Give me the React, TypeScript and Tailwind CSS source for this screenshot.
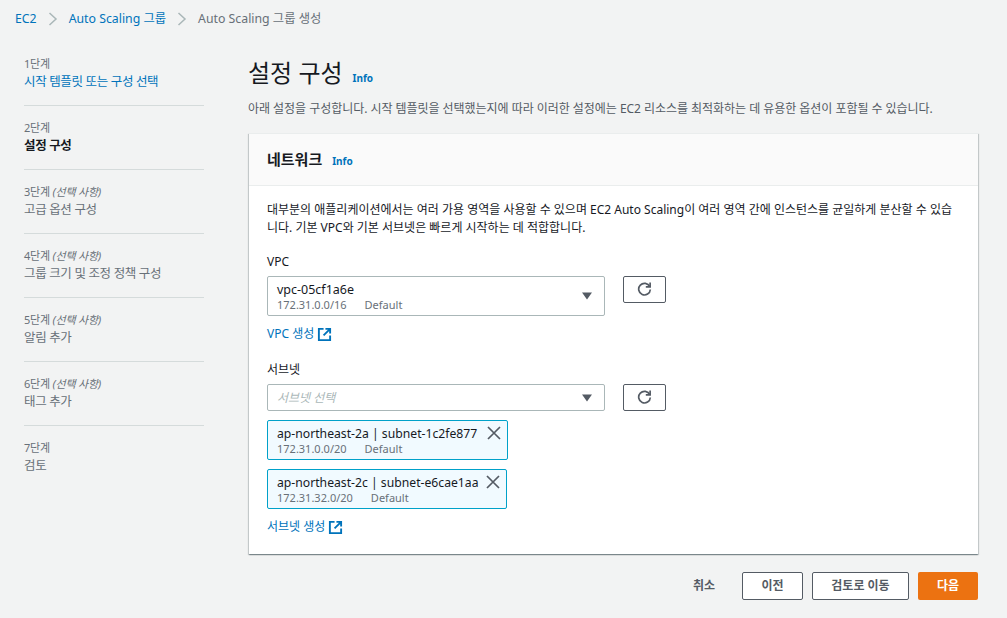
import React from "react";

const F = { fontFamily: '"Noto Sans", "Noto Sans CJK KR", sans-serif' };

function Step({ n, opt, title, cls, last }: { n: string; opt?: boolean; title: string; cls: string; last?: boolean }) {
  return (
    <div className={last ? "h-[50px]" : "h-[50px] border-b border-[#d5dbdb]"}>
      <div className="text-[11px] leading-[16px] text-[#687078] h-[16px] tracking-[-0.2px]">
        {n}단계{opt && <i> (선택 사항)</i>}
      </div>
      <div className={"text-[12.5px] leading-[20px] tracking-[-0.35px] " + cls}>{title}</div>
    </div>
  );
}

function Ext() {
  return (
    <svg width="15" height="15" viewBox="0 0 16 16" fill="none" stroke="#0073bb" strokeWidth="2" className="ml-[3px]">
      <path d="M7 2H2v12h12V9" />
      <path d="M9 2h5v5M14 2L7 9" />
    </svg>
  );
}

function Refresh() {
  return (
    <button className="w-[43px] h-[27px] border border-[#545b64] rounded-[2px] bg-white flex items-center justify-center">
      <svg width="15" height="15" viewBox="0 0 16 16" fill="none" stroke="#545b64" strokeWidth="1.8" className="-mt-[2px]">
        <path d="M14 1.5v4.7H9.4" />
        <path d="M13.6 6A6.2 6.2 0 1 0 14.2 9" />
      </svg>
    </button>
  );
}

function Caret() {
  return (
    <svg width="12" height="8" viewBox="0 0 12 8" className="shrink-0">
      <path d="M1 0.5h10L6 7.5z" fill="#545b64" />
    </svg>
  );
}

function Token({ w, title, cidr }: { w: string; title: string; cidr: string }) {
  return (
    <div className={"h-[40px] border border-[#00a1c9] rounded-[2px] bg-[#f1faff] flex justify-between pl-[9px] pr-[6px] " + w}>
      <div>
        <div className="text-[12.2px] leading-[18px] pt-[4px] h-[21px] text-[#16191f] whitespace-nowrap">{title}</div>
        <div className="text-[11px] leading-[14px] text-[#687078] flex whitespace-nowrap">
          <span className="mr-[18px]">{cidr}</span>
          <span>Default</span>
        </div>
      </div>
      <svg width="14" height="14" viewBox="0 0 14 14" fill="none" stroke="#545b64" strokeWidth="1.7" className="mt-[5px] shrink-0">
        <path d="M1 1l12 12M13 1L1 13" />
      </svg>
    </div>
  );
}

function Gap() {
  return <div className="h-[14px]" />;
}

export default function App() {
  return (
    <div style={F} className="w-[1007px] h-[618px] overflow-hidden bg-[#f2f3f3] text-[#16191f]">
      <nav className="h-[38px] pl-[15px] flex items-center text-[12.3px] text-[#0073bb]">
        <span>EC2</span>
        <svg width="10" height="14" viewBox="0 0 10 14" fill="none" stroke="#aab7b8" strokeWidth="1.5" className="mx-[11px]">
          <path d="M1.5 1l6.5 6-6.5 6" />
        </svg>
        <span>Auto Scaling 그룹</span>
        <svg width="10" height="14" viewBox="0 0 10 14" fill="none" stroke="#aab7b8" strokeWidth="1.5" className="mx-[11px]">
          <path d="M1.5 1l6.5 6-6.5 6" />
        </svg>
        <span className="text-[#687078]">Auto Scaling 그룹 생성</span>
      </nav>
      <div className="flex pl-[24px] pt-[18px]">
        <aside className="w-[180px] shrink-0 mr-[44px]">
          <Step n="1" title="시작 템플릿 또는 구성 선택" cls="text-[#0073bb]" />
          <Gap />
          <Step n="2" title="설정 구성" cls="font-bold" />
          <Gap />
          <Step n="3" opt title="고급 옵션 구성" cls="text-[#687078]" />
          <Gap />
          <Step n="4" opt title="그룹 크기 및 조정 정책 구성" cls="text-[#687078]" />
          <Gap />
          <Step n="5" opt title="알림 추가" cls="text-[#687078]" />
          <Gap />
          <Step n="6" opt title="태그 추가" cls="text-[#687078]" />
          <Gap />
          <Step n="7" title="검토" cls="text-[#687078]" last />
        </aside>
        <main className="w-[730px]">
          <div className="flex items-baseline h-[34px]">
            <h1 className="text-[24px] leading-[34px]">설정 구성</h1>
            <span className="ml-[10px] text-[10px] font-bold text-[#0073bb]">Info</span>
          </div>
          <p className="mt-[10px] text-[12px] leading-[18px] text-[#545b64] tracking-[-0.04px] whitespace-nowrap">
            아래 설정을 구성합니다. 시작 템플릿을 선택했는지에 따라 이러한 설정에는 EC2 리소스를 최적화하는 데 유용한 옵션이 포함될 수 있습니다.
          </p>
          <section className="mt-[15px] ml-[1px] h-[421px] bg-white border-t border-[#eaeded] shadow-[0_1px_1px_0_rgba(0,28,36,0.3),1px_1px_1px_0_rgba(0,28,36,0.15),-1px_1px_1px_0_rgba(0,28,36,0.15)]">
            <header className="h-[52px] bg-[#fafafa] border-b border-[#eaeded] flex items-center pl-[18px]">
              <h2 className="text-[15px] font-bold">네트워크</h2>
              <span className="ml-[10px] text-[10px] font-bold text-[#0073bb] mt-[3px]">Info</span>
            </header>
            <div className="pl-[18px] pt-[15px]">
              <p className="text-[12px] leading-[18px] whitespace-nowrap">
                대부분의 애플리케이션에서는 여러 가용 영역을 사용할 수 있으며 EC2 Auto Scaling이 여러 영역 간에 인스턴스를 균일하게 분산할 수 있습
                <br />
                니다. 기본 VPC와 기본 서브넷은 빠르게 시작하는 데 적합합니다.
              </p>
              <div className="mt-[16px] text-[12px] leading-[18px]">VPC</div>
              <div className="mt-[5px] flex items-start">
                <div className="w-[338px] h-[40px] border border-[#aab7b8] rounded-[2px] flex items-center justify-between pl-[9px] pr-[11px]">
                  <div className="pt-[2px]">
                    <div className="text-[12.5px] leading-[16px]">vpc-05cf1a6e</div>
                    <div className="text-[11px] leading-[14px] text-[#687078]">
                      <span className="mr-[18px]">172.31.0.0/16</span>Default
                    </div>
                  </div>
                  <Caret />
                </div>
                <div className="ml-[18px]"><Refresh /></div>
              </div>
              <div className="mt-[9px] flex items-center text-[12px] leading-[18px] text-[#0073bb]">VPC 생성<Ext /></div>
              <div className="mt-[18px] text-[12px] leading-[18px]">서브넷</div>
              <div className="mt-[5px] flex items-start">
                <div className="w-[338px] h-[27px] border border-[#aab7b8] rounded-[2px] flex items-center justify-between pl-[9px] pr-[11px]">
                  <i className="text-[12px] text-[#aab7b8]">서브넷 선택</i>
                  <Caret />
                </div>
                <div className="ml-[18px]"><Refresh /></div>
              </div>
              <div className="mt-[9px]"><Token w="w-[241px]" title="ap-northeast-2a | subnet-1c2fe877" cidr="172.31.0.0/20" /></div>
              <div className="mt-[9px]"><Token w="w-[240px]" title="ap-northeast-2c | subnet-e6cae1aa" cidr="172.31.32.0/20" /></div>
              <div className="mt-[9px] flex items-center text-[12px] leading-[18px] text-[#0073bb]">서브넷 생성<Ext /></div>
            </div>
          </section>
          <div className="mt-[18px] flex justify-end items-center text-[12px] font-bold text-[#545b64]">
            <span className="mr-[27px]">취소</span>
            <button className="w-[61px] h-[28px] border border-[#545b64] rounded-[2px] bg-white">이전</button>
            <button className="ml-[9px] w-[97px] h-[28px] border border-[#545b64] rounded-[2px] bg-white">검토로 이동</button>
            <button className="ml-[9px] w-[60px] h-[28px] rounded-[2px] bg-[#ec7211] text-white">다음</button>
          </div>
        </main>
      </div>
    </div>
  );
}
